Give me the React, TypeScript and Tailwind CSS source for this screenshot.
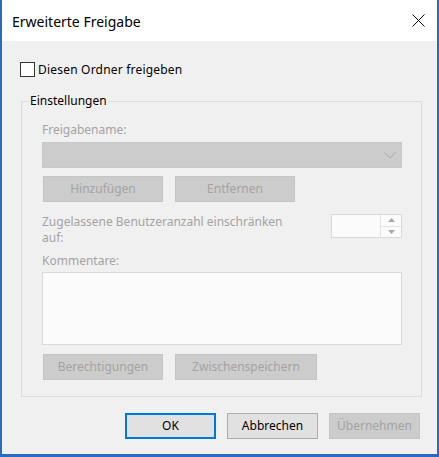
export default function App() {
  const disabledBtn =
    'h-[26px] flex items-center justify-center bg-[#cccccc] border border-[#c4c4c4] text-[#a3a3a3]';

  return (
    <div className="w-[439px] h-[457px] flex flex-col bg-[#f0f0f0] border-x-2 border-b-[3px] border-[#2b6bbf] font-['Noto_Sans',sans-serif] text-[12px] leading-[16px] text-black overflow-hidden">
      {/* title bar */}
      <div className="h-[41px] shrink-0 bg-white flex items-center justify-between pl-[10px] pr-[12px]">
        <span className="text-[14px] leading-[20px] mt-[2px]">Erweiterte Freigabe</span>
        <svg width="13" height="13" viewBox="0 0 13 13" className="text-black">
          <path d="M0.5 0.5 L12.5 12.5 M12.5 0.5 L0.5 12.5" stroke="currentColor" strokeWidth="1" fill="none" />
        </svg>
      </div>

      <div className="flex-1 flex flex-col pl-[18px] pr-[17px] pt-[21px]">
        <label className="flex items-center gap-[3px] h-[15px]">
          <span className="w-[15px] h-[15px] border border-[#333333] bg-white shrink-0" />
          <span className="tracking-[0.2px]">Diesen Ordner freigeben</span>
        </label>

        <fieldset className="mt-[16px] ml-[1px] w-[401px] border border-[#dcdcdc] pb-[16px]">
          <legend className="ml-[7px] px-[1px]">Einstellungen</legend>

          <div className="pl-[20px] pr-[19px]">
            <div className="mt-[13px] text-[#a3a3a3]">Freigabename:</div>
            <div className="mt-[4px] h-[26px] bg-[#cccccc] border border-[#c8c8c8] flex items-center justify-end pr-[5px]">
              <svg width="12" height="7" viewBox="0 0 12 7">
                <path d="M0.5 0.5 L6 6 L11.5 0.5" stroke="#a9a9a9" strokeWidth="1" fill="none" />
              </svg>
            </div>

            <div className="mt-[8px] flex gap-[12px] pl-[1px]">
              <div className={`${disabledBtn} w-[120px]`}>Hinzufügen</div>
              <div className={`${disabledBtn} w-[120px]`}>Entfernen</div>
            </div>

            <div className="mt-[12px] flex justify-between items-start">
              <div className="text-[#a3a3a3] w-[280px]">
                Zugelassene Benutzeranzahl einschränken
                <br />
                auf:
              </div>
              <div className="flex h-[24px] w-[71px] border border-[#d9d9d9] bg-[#fbfbfb]">
                <div className="flex-1" />
                <div className="w-[21px] flex flex-col border-l border-[#e3e3e3]">
                  <div className="flex-1 flex items-center justify-center border-b border-[#e3e3e3]">
                    <svg width="7" height="4" viewBox="0 0 7 4">
                      <path d="M0 4 L3.5 0 L7 4 Z" fill="#a8a8a8" />
                    </svg>
                  </div>
                  <div className="flex-1 flex items-center justify-center">
                    <svg width="7" height="4" viewBox="0 0 7 4">
                      <path d="M0 0 L3.5 4 L7 0 Z" fill="#a8a8a8" />
                    </svg>
                  </div>
                </div>
              </div>
            </div>

            <div className="mt-[7px] text-[#a3a3a3]">Kommentare:</div>
            <div className="mt-[3px] h-[73px] border border-[#d9d9d9] bg-[#fbfbfb]" />

            <div className="mt-[9px] flex gap-[12px] pl-[1px]">
              <div className={`${disabledBtn} w-[120px]`}>Berechtigungen</div>
              <div className={`${disabledBtn} w-[142px]`}>Zwischenspeichern</div>
            </div>
          </div>
        </fieldset>

        <div className="mt-[16px] flex justify-end gap-[11px]">
          <div className="w-[91px] h-[26px] flex items-center justify-center bg-[#e1e1e1] border-2 border-[#0078d7]">
            OK
          </div>
          <div className="w-[91px] h-[26px] flex items-center justify-center bg-[#e1e1e1] border border-[#adadad]">
            Abbrechen
          </div>
          <div className="w-[91px] h-[26px] flex items-center justify-center bg-[#cccccc] border border-[#c4c4c4] text-[#a3a3a3]">
            Übernehmen
          </div>
        </div>
      </div>
    </div>
  );
}
